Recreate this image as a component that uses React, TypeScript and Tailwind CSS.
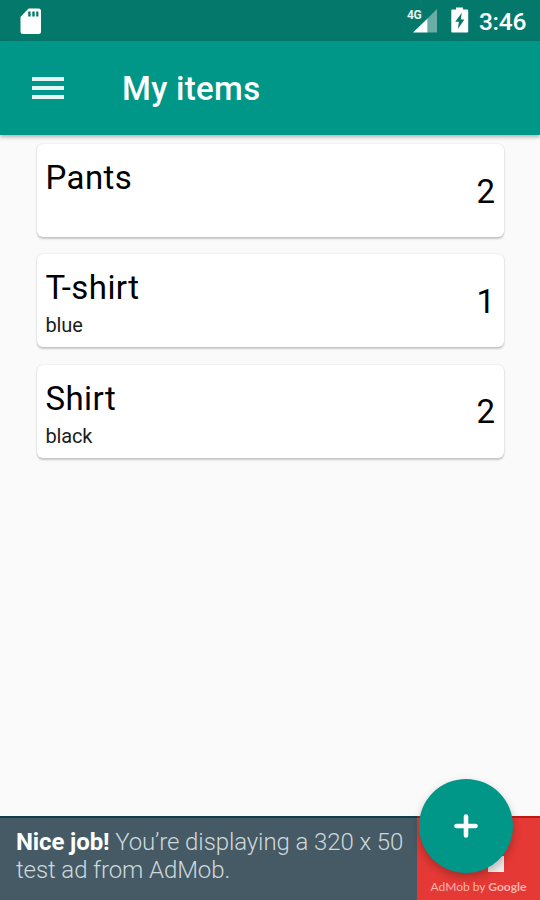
interface Item {
  id: number;
  name: string;
  note?: string;
  count: number;
}

const ITEMS: Item[] = [
  { id: 1, name: 'Pants', count: 2 },
  { id: 2, name: 'T-shirt', note: 'blue', count: 1 },
  { id: 3, name: 'Shirt', note: 'black', count: 2 }
];

const StatusBar = () => (
  <div className="flex h-[41px] items-start justify-between bg-[#04796b] text-white">
    <svg viewBox="0 0 22 27" className="mt-[7.5px] ml-[20px] h-[27px] w-[22px]">
      <path
        d="M8.5 0.5H18.5Q21 0.5 21 3V23.5Q21 26 18.5 26H3Q0.5 26 0.5 23.5V9Z"
        fill="#fff"
      />
      <path d="M8.2 3.5h2.4v5H8.2zM12.3 3.5h2.4v5h-2.4zM16.2 3.5h2.2v5h-2.2z" fill="#04796b" />
    </svg>
    <div className="flex items-start">
      <div className="relative h-[41px] w-[31px]">
        <span className="absolute top-[9px] left-0 text-[12px] leading-[13px] font-bold tracking-[-0.4px] text-white/90">
          4G
        </span>
        <svg viewBox="0 0 24 24" className="absolute top-[8.5px] left-[6px] h-[24px] w-[24px]">
          <path d="M14.5 9.5L24 0V23.5H14.5Z" fill="#fff" fillOpacity="0.4" />
          <path d="M0 23.5L14.5 9.5V23.5Z" fill="#fff" />
        </svg>
      </div>
      <svg viewBox="0 0 18 26" className="mt-[7px] ml-[13px] h-[26px] w-[18px]">
        <path
          d="M5 0.5h7v2h4.2q1 0 1 1V24.5q0 1-1 1H1.3q-1 0-1-1V3.5q0-1 1-1H5z"
          fill="#fff"
        />
        <path d="M10.8 5.8L4.2 14.7h3.7L6.8 22l6.6-9.4H9.8z" fill="#04796b" />
      </svg>
      <span className="mt-[8px] mr-[13px] ml-[10px] w-[48px] text-[24.5px] leading-[28px] font-medium tracking-[-0.3px]">
        3:46
      </span>
    </div>
  </div>
);

const AppBar = () => (
  <header className="relative flex h-[94px] items-center bg-[#009688] shadow-[0_2px_4px_rgba(0,0,0,0.3)]">
    <div className="ml-[32px] flex w-[32px] flex-col gap-[5px]">
      <span className="h-[4px] bg-white/90" />
      <span className="h-[4px] bg-white/90" />
      <span className="h-[4px] bg-white/90" />
    </div>
    <h1 className="mt-[2px] ml-[58px] text-[33px] leading-[40px] font-medium tracking-[0.3px] text-white">
      My items
    </h1>
  </header>
);

const ItemCard = ({ item }: { item: Item }) => (
  <li className="flex h-[93px] items-center justify-between rounded-[6px] bg-white pr-[9px] pl-[8.5px] text-black shadow-[0_1.5px_2px_rgba(0,0,0,0.2),0_0_2px_rgba(0,0,0,0.1)]">
    <div className="h-full pt-[14px]">
      <div className="text-[33px] leading-[40px] tracking-[0.4px]">{item.name}</div>
      {item.note && (
        <div className="mt-[15px] text-[20px] leading-[4px] tracking-[-0.15px] text-[#1c1c1c]">
          {item.note}
        </div>
      )}
    </div>
    <span className="pt-[2px] text-[33px] leading-[40px]">{item.count}</span>
  </li>
);

const AdBanner = () => (
  <div className="flex h-[84px] bg-[#455a64]">
    <p className="w-[417px] border-t-2 border-[#143c4c] pt-[10px] pl-[16px] text-[24px] leading-[28px] font-light tracking-[-0.1px] whitespace-nowrap text-[#cfd8dc]">
      <b className="font-bold tracking-[-0.12px] text-white">Nice job!</b> You’re displaying a 320 x 50
      <br />
      test ad from AdMob.
    </p>
    <div className="relative flex flex-1 items-end justify-center border-t-2 border-[#c51616] bg-[#e53935]">
      <span className="absolute top-[38px] left-[71px] h-[16px] w-[16px] bg-[#eeeeee]" />
      <span className="pb-[5px] font-[Lato,sans-serif] text-[12px] leading-[16px] whitespace-nowrap text-[#ffb3ad]">
        AdMob by <span className="font-bold">Google</span>
      </span>
    </div>
  </div>
);

export default function App() {
  return (
    <div className="relative flex h-[900px] w-[540px] flex-col overflow-hidden bg-[#fafafa] font-[Roboto,sans-serif]">
      <StatusBar />
      <AppBar />
      <ul className="flex flex-1 flex-col gap-[17.4px] pt-[9px] pr-[36px] pl-[37px]">
        {ITEMS.map((item) => (
          <ItemCard key={item.id} item={item} />
        ))}
      </ul>
      <AdBanner />
      <button
        aria-label="Add item"
        className="absolute top-[779px] left-[419px] flex h-[94px] w-[94px] items-center justify-center rounded-full bg-[#009688] shadow-[0_4px_8px_rgba(0,0,0,0.25)]"
      >
        <svg viewBox="0 0 24 24" className="h-[24px] w-[24px]">
          <path d="M12 2.5v19M2.5 12h19" stroke="#fff" strokeWidth="4.6" strokeLinecap="round" />
        </svg>
      </button>
    </div>
  );
}
